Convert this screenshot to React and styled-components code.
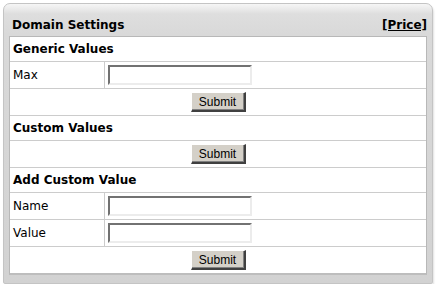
import React from "react";
import styled, { createGlobalStyle } from "styled-components";

const GlobalStyle = createGlobalStyle`
  html, body {
    margin: 0;
    padding: 0;
    background: #fff;
  }
  body {
    font-family: "DejaVu Sans", Verdana, sans-serif;
    font-size: 12px;
    color: #000;
  }
`;

const App = () => {
    return (
        <>
            <GlobalStyle />
            <Panel>
                <Header>
                    <Title>Domain Settings</Title>
                    <PriceLink href="#">[Price]</PriceLink>
                </Header>
                <Body>
                    <SectionRow>Generic Values</SectionRow>
                    <FieldRow>
                        <Label>Max</Label>
                        <Cell><TextInput /></Cell>
                    </FieldRow>
                    <ActionRow><Button>Submit</Button></ActionRow>
                    <SectionRow>Custom Values</SectionRow>
                    <ActionRow><Button>Submit</Button></ActionRow>
                    <SectionRow>Add Custom Value</SectionRow>
                    <FieldRow>
                        <Label>Name</Label>
                        <Cell><TextInput /></Cell>
                    </FieldRow>
                    <FieldRow>
                        <Label>Value</Label>
                        <Cell><TextInput /></Cell>
                    </FieldRow>
                    <ActionRow $last><Button>Submit</Button></ActionRow>
                </Body>
            </Panel>
        </>
    );
};

const Panel = styled.div`
  margin: 3px 0 0 3px;
  width: 430px;
  box-sizing: border-box;
  padding: 0 5px 8px 5px;
  border: 1px solid #c4c4c4;
  border-radius: 7px 7px 2px 2px;
  background: linear-gradient(#f6f6f6 0px, #dedede 10px, #d9d9d9 30px, #d2d2d2 100%);
  box-shadow: 1px 2px 2px rgba(0, 0, 0, 0.12);
`;

const Header = styled.div`
  display: flex;
  align-items: flex-end;
  justify-content: space-between;
  height: 32px;
  padding: 0 0 4px 3px;
  box-sizing: border-box;
`;

const Title = styled.div`
  font-weight: bold;
  font-size: 12px;
`;

const PriceLink = styled.a`
  font-weight: bold;
  font-size: 12px;
  color: #000;
  text-decoration: underline;
`;

const Body = styled.div`
  background: #fff;
  border: 1px solid #b8b8b8;
  border-bottom: 2px solid #bdbdbd;
`;

const SectionRow = styled.div`
  display: flex;
  align-items: center;
  height: 24px;
  padding-left: 3px;
  font-weight: bold;
  border-bottom: 1px solid #cccccc;
`;

const FieldRow = styled.div`
  display: grid;
  grid-template-columns: 95px 1fr;
  height: 26px;
  border-bottom: 1px solid #cccccc;
`;

const Label = styled.div`
  display: flex;
  align-items: center;
  padding-left: 3px;
  border-right: 1px solid #cccccc;
`;

const Cell = styled.div`
  display: flex;
  align-items: center;
  padding-left: 3px;
`;

const TextInput = styled.input.attrs(() => ({ type: "text" }))`
  box-sizing: border-box;
  width: 144px;
  height: 20px;
  margin: 0;
  padding: 0 2px;
  border-style: solid;
  border-width: 2px;
  border-color: #727272 #ececec #ececec #727272;
  background: #fff;
  outline: none;
`;

const ActionRow = styled.div`
  display: flex;
  align-items: center;
  justify-content: center;
  height: 26px;
  border-bottom: ${p => (p.$last ? "none" : "1px solid #cccccc")};
`;

const Button = styled.button`
  box-sizing: border-box;
  width: 55px;
  height: 20px;
  margin: 0;
  padding: 0;
  font-family: "Liberation Sans", Arial, sans-serif;
  font-size: 12px;
  color: #000;
  background: #d4d0c8;
  border-style: solid;
  border-width: 1px 2px 2px 1px;
  border-color: #ffffff #404040 #404040 #ffffff;
  box-shadow: inset -1px -1px 0 #808080;
`;

export default App;
